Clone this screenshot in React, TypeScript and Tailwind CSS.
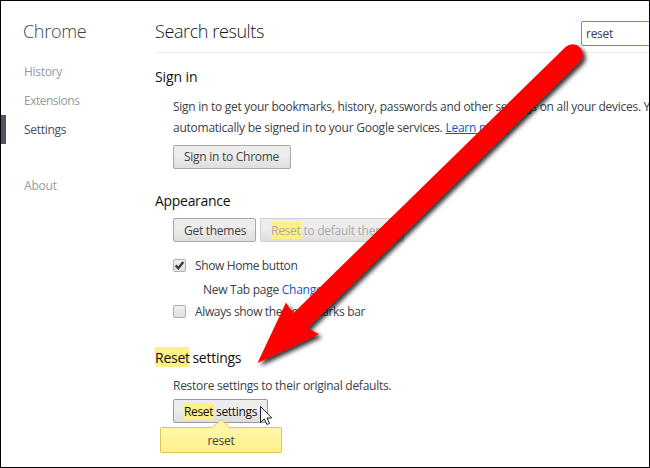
import React from "react";

const button =
  "flex h-6 items-center rounded-[2px] border px-[10px] text-[12px] tracking-[-0.27px] whitespace-nowrap bg-linear-to-b from-[#ededed] from-40% to-[#dedede]";

function Mark({ children }: { children: React.ReactNode }) {
  return <mark className="bg-[#fff087] text-inherit">{children}</mark>;
}

function Checkbox({ checked = false }: { checked?: boolean }) {
  return (
    <span className="flex h-[13px] w-[13px] shrink-0 items-center justify-center rounded-[2px] border border-[#b0b0b0] bg-linear-to-b from-[#f0f0f0] to-[#dedede]">
      {checked && (
        <svg width="11" height="11" viewBox="0 0 11 11" fill="none">
          <path d="M1.7 5.4L4.3 8.2L9.3 2" stroke="#3c3c3c" strokeWidth="2.4" />
        </svg>
      )}
    </span>
  );
}

function Sidebar() {
  return (
    <nav className="flex w-[154px] shrink-0 flex-col text-[12px] tracking-[-0.3px] text-[#999]">
      <h1 className="mt-[17px] h-[26px] pl-[22px] text-[18px] leading-[26px] font-light tracking-[-0.3px] text-[#3c4148]">
        <span>Chrome</span>
      </h1>
      <a className="mt-[13px] flex h-[29px] items-center pl-[23px]"><span>History</span></a>
      <a className="flex h-[29px] items-center pl-[23px] tracking-[-0.5px]"><span>Extensions</span></a>
      <a className="flex h-[29px] items-center border-l-[5px] border-[#4e5764] pl-[18px] text-[#464e5a]"><span>Settings</span></a>
      <a className="mt-[27px] flex h-[29px] items-center pl-[23px] tracking-[-0.2px]"><span>About</span></a>
    </nav>
  );
}

export default function App() {
  return (
    <div className="relative flex h-[468px] w-[650px] overflow-hidden border border-black bg-white font-['Open_Sans','Noto_Sans',sans-serif] text-[12px] tracking-[-0.27px] text-[#3a4148]">
      <Sidebar />
      <main className="flex min-w-0 flex-1 flex-col">
        <header className="flex h-[52px] shrink-0 border-b border-[#eee]">
          <h2 className="mt-[17px] w-[426px] shrink-0 text-[18px] leading-[26px] font-light tracking-[-0.4px] text-[#101820]"><span>Search results</span></h2>
          <div className="mt-5 flex h-[25px] w-[140px] shrink-0 items-center rounded-[2px] border border-[#4d90fe] pt-px pl-1">
            <span>reset</span>
          </div>
        </header>

        <section className="flex shrink-0 flex-col">
          <h3 className="mt-[14px] h-5 text-[14px] leading-5 tracking-[-0.1px] text-[#111]"><span>Sign in</span></h3>
          <div className="mt-[9px] flex flex-col pl-[18px]">
            <p className="h-[42px] leading-[21px] tracking-[-0.25px] whitespace-nowrap">
              <span className="tracking-[-0.275px]">Sign in to get your bookmarks, history, passwords and other settings on all your devices. Y</span>
              <br />
              <span>automatically be signed in to your Google services. </span>
              <a className="text-[#15c] underline">Learn more</a>
            </p>
            <div className="mt-[7px] flex">
              <button className={`${button} w-[118px] border-[#a8a8a8] text-[#444]`}><span>Sign in to Chrome</span></button>
            </div>
          </div>
        </section>

        <section className="flex shrink-0 flex-col">
          <h3 className="mt-[22px] h-5 text-[14px] leading-5 tracking-[-0.3px] text-[#111]"><span>Appearance</span></h3>
          <div className="mt-[7px] flex flex-col pl-[18px]">
            <div className="flex gap-1">
              <button className={`${button} w-[83px] border-[#a8a8a8] pt-[2px] tracking-[-0.4px] text-[#444]`}><span>Get themes</span></button>
              <button className={`${button} w-[144px] border-[#cfcfcf] pt-[2px] text-[#aaa]`}>
                <span className="whitespace-pre"><Mark>Reset</Mark> to default theme</span>
              </button>
            </div>
            <label className="mt-[13px] flex h-[21px] items-center gap-[9px] tracking-[-0.38px]">
              <Checkbox checked />
              <span>Show Home button</span>
            </label>
            <div className="mt-[3px] h-[21px] pl-[30px] leading-[21px]">
              <span>New Tab page </span><a className="text-[#15c]">Change</a>
            </div>
            <label className="mt-px flex h-[21px] items-center gap-[9px] tracking-[-0.36px]">
              <Checkbox />
              <span>Always show the bookmarks bar</span>
            </label>
          </div>
        </section>

        <section className="flex shrink-0 flex-col">
          <h3 className="mt-[25px] flex h-5 text-[14px] leading-[22px] tracking-[-0.25px] whitespace-pre text-[#111]"><mark className="h-5 w-[34px] bg-[#fff087] text-inherit">Reset</mark><span> settings</span></h3>
          <div className="mt-[8px] flex flex-col pl-[18px]">
            <p className="h-[21px] leading-[21px]"><span>Restore settings to their original defaults.</span></p>
            <div className="mt-[3px] flex">
              <button className={`${button} w-[95px] border-[#999] pt-[2px] tracking-[-0.33px] text-[#111]`}>
                <span className="whitespace-pre"><Mark>Reset</Mark> settings</span>
              </button>
            </div>
          </div>
        </section>
      </main>

      <div className="absolute top-[426px] left-[159px] flex h-[26px] w-[122px] items-center justify-center rounded-[2px] border border-[#dac655] bg-linear-to-b from-[#fff8aa] to-[#fff08b] pt-[2px]">
        <svg className="absolute -top-[9px] left-[51px]" width="18" height="10" viewBox="0 0 18 10">
          <path d="M0.5 8.5L9 0.5L17.5 8.5V10H0.5Z" fill="#fff6a6" />
          <path d="M0.5 8.5L9 0.5L17.5 8.5" fill="none" stroke="#dac655" />
        </svg>
        <span>reset</span>
      </div>

      <svg className="absolute -top-px -left-px" width="650" height="467" viewBox="0 0 650 467">
        <defs>
          <filter id="shadow" x="-10%" y="-10%" width="120%" height="120%">
            <feDropShadow dx="3" dy="3" stdDeviation="2.2" floodColor="#000" floodOpacity="0.8" />
          </filter>
        </defs>
        <path
          d="M257.5 363L286 302.500L293 313.500L565.8 46.800A10.200 10.200 0 0 1 580.200 61.200L307.500 328L319 334.300Z"
          fill="#f00"
          filter="url(#shadow)"
        />
        <path
          d="M260.500 406.500V422.500L264.300 418.900L267 424.500L269.500 423.400L267 418H271.800Z"
          fill="#fff"
          stroke="#222"
        />
      </svg>
    </div>
  );
}
